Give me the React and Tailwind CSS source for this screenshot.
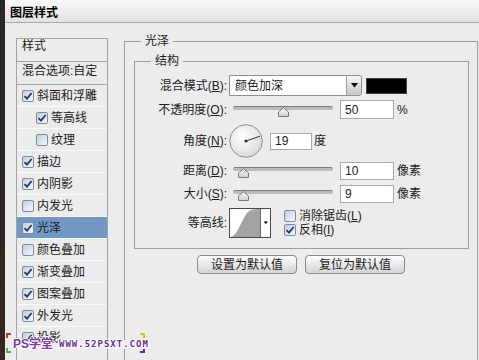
import React from 'react';

const items = [
  { t: '斜面和浮雕', on: true },
  { t: '等高线', on: true, sub: true },
  { t: '纹理', on: false, sub: true },
  { t: '描边', on: true },
  { t: '内阴影', on: true },
  { t: '内发光', on: false },
  { t: '光泽', on: true, sel: true },
  { t: '颜色叠加', on: false },
  { t: '渐变叠加', on: true },
  { t: '图案叠加', on: true },
  { t: '外发光', on: true },
  { t: '投影', on: true },
];

function Check({ on }) {
  return (
    <span className="flex h-[12px] w-[12px] shrink-0 items-center justify-center rounded-[2px] border border-[#7c8ba2] bg-linear-to-br from-[#c3cedd] to-[#f8fafc]">
      {on && (
        <svg width="10" height="10" viewBox="0 0 10 10">
          <path d="M1.5 5.2 L4 7.6 L8.6 2" fill="none" stroke="#1d3a6e" strokeWidth="1.8" />
        </svg>
      )}
    </span>
  );
}

function Label({ children }) {
  return <span className="w-[92px] shrink-0 text-right leading-[14px]">{children}</span>;
}

function Slider({ value }) {
  // thumb position across a 100px track
  const left = 4.5 + (value / 100) * 80;
  return (
    <div className="relative ml-[6px] h-[18px] w-[100px] shrink-0">
      <div className="absolute left-0 right-0 top-[5px] h-[4px] rounded-full border-t border-[#7c7c7c] bg-[#bcbcbc]" />
      <svg className="absolute top-[6px]" style={{ left }} width="11" height="10" viewBox="0 0 11 10">
        <defs>
          <linearGradient id="th" x1="0" y1="0" x2="0" y2="1">
            <stop offset="0" stopColor="#fafafa" />
            <stop offset="1" stopColor="#cfcfcf" />
          </linearGradient>
        </defs>
        <path d="M0.5 5 L5.5 0.7 L10.5 5 L10.5 9.5 L0.5 9.5 Z" fill="url(#th)" stroke="#7a7a7a" />
      </svg>
    </div>
  );
}

function Field({ children, w = 'w-[54px]', h = 'h-[18px]', ml = 'ml-[7px]' }) {
  return (
    <div className={`${ml} ${w} ${h} flex shrink-0 items-center border border-[#a9a9a9] bg-white pl-[4px] text-[12px] leading-[12px]`}>
      {children}
    </div>
  );
}

export default function App() {
  return (
    <div className="relative flex h-[360px] w-[479px] overflow-hidden bg-[#ececec] font-['Liberation_Sans','Noto_Sans_CJK_SC',sans-serif] text-[12px] text-[#1b1b1b]">
      <div className="w-[5px] shrink-0 bg-linear-to-b from-[#262626] via-[#2b2523] to-[#3a2420]" />

      <div className="flex flex-1 flex-col">
        {/* title bar */}
        <div className="flex h-[23px] shrink-0 items-start border-b border-[#a9a9a9] bg-linear-to-b from-[#f8f8f8] to-[#e2e2e2] pl-[5px] pt-[6px]">
          <span className="text-[12px] font-bold leading-[14px] text-black">图层样式</span>
        </div>

        <div className="flex flex-1">
          {/* style list */}
          <div className="ml-[11px] mt-[15px] h-[400px] w-[92px] shrink-0 border border-[#a3a3a3]">
            <div className="h-[23px] border-b border-[#a3a3a3] pl-[5px] pt-[1px] leading-[12px]">样式</div>
            <div className="h-[23px] border-b border-[#a3a3a3] pl-[5px] pt-[3px] leading-[12px]">混合选项:自定</div>
            {items.map((it) => (
              <div
                key={it.t}
                className={`flex h-[22px] items-center gap-[3px] border-b border-[#f9f9f9] leading-[12px] ${it.sub ? 'pl-[19px]' : 'pl-[5px]'} ${it.sel ? 'bg-[#7297c5]' : ''}`}
              >
                <Check on={it.on} />
                <span>{it.t}</span>
              </div>
            ))}
          </div>

          {/* 光泽 group */}
          <fieldset className="ml-[16px] mt-[10px] h-[400px] w-[354px] shrink-0 border border-[#9d9d9d]">
            <legend className="ml-[16px] px-[4px] leading-[16px]">光泽</legend>

            <fieldset className="ml-[9px] mt-[4px] w-[335px] border border-[#9d9d9d] pb-[10px]">
              <legend className="ml-[16px] px-[4px] leading-[16px]">结构</legend>

              <div className="mt-[6px] flex h-[21px] items-center">
                <Label>混合模式(<u>B</u>):</Label>
                <div className="ml-[2px] flex h-[21px] w-[133px] shrink-0 items-center rounded-r-[3px] border border-[#8e8e8e] bg-white">
                  <span className="flex-1 pl-[5px] leading-[14px]">颜色加深</span>
                  <span className="flex h-full w-[15px] items-center justify-center rounded-r-[2px] border-l border-[#a0a0a0] bg-linear-to-b from-[#f7f7f7] to-[#c6c6c6]">
                    <svg width="7" height="5" viewBox="0 0 7 5">
                      <path d="M0 0 H7 L3.5 4.5 Z" fill="#000" />
                    </svg>
                  </span>
                </div>
                <div className="ml-[4px] h-[16px] w-[41px] shrink-0 border border-[#444] bg-black" />
              </div>

              <div className="mt-[4px] flex h-[19px] items-center">
                <Label>不透明度(<u>O</u>):</Label>
                <Slider value={50} />
                <Field h="h-[19px]">50</Field>
                <span className="ml-[3px]">%</span>
              </div>

              <div className="mt-[5px] flex h-[34px] items-center">
                <Label>角度(<u>N</u>):</Label>
                <svg className="ml-[2px] shrink-0" width="34" height="34" viewBox="0 0 34 34">
                  <defs>
                    <radialGradient id="dial" cx="0.4" cy="0.35" r="0.7">
                      <stop offset="0" stopColor="#ffffff" />
                      <stop offset="1" stopColor="#d9d9d9" />
                    </radialGradient>
                  </defs>
                  <circle cx="17" cy="17" r="16.3" fill="url(#dial)" stroke="#8d8d8d" />
                  <line x1="17" y1="17" x2="31" y2="12.2" stroke="#333" strokeWidth="1" />
                  <circle cx="17" cy="17" r="1.6" fill="#333" />
                </svg>
                <Field w="w-[42px]" h="h-[17px]" ml="ml-[7px]">19</Field>
                <span className="ml-[2px]">度</span>
              </div>

              <div className="mt-[4px] flex h-[18px] items-center">
                <Label>距离(<u>D</u>):</Label>
                <Slider value={0} />
                <Field>10</Field>
                <span className="ml-[3px]">像素</span>
              </div>

              <div className="mt-[5px] flex h-[18px] items-center">
                <Label>大小(<u>S</u>):</Label>
                <Slider value={0} />
                <Field>9</Field>
                <span className="ml-[3px]">像素</span>
              </div>

              <div className="mt-[5px] flex h-[30px] items-center">
                <Label>等高线:</Label>
                <svg className="ml-[2px] shrink-0" width="42" height="30" viewBox="0 0 42 30">
                  <rect x="0.5" y="0.5" width="41" height="29" fill="#fff" stroke="#4a4a4a" />
                  <path d="M2 29 C9 27 12 12 19 4 C22 1 26 1 31 1 L31 29 Z" fill="#a3a3a3" />
                  <line x1="31.5" y1="1" x2="31.5" y2="29" stroke="#6a6a6a" />
                  <path d="M34.5 13.5 H39 L36.75 16 Z" fill="#000" />
                </svg>
                <div className="ml-[13px] flex flex-col gap-[2px]">
                  <div className="flex items-center gap-[3px] leading-[12px]">
                    <Check on={false} />
                    <span>消除锯齿(<u>L</u>)</span>
                  </div>
                  <div className="flex items-center gap-[3px] leading-[12px]">
                    <Check on={true} />
                    <span>反相(<u>I</u>)</span>
                  </div>
                </div>
              </div>
            </fieldset>

            <div className="mt-[6px] flex justify-center gap-[8px]">
              <button className="h-[19px] w-[100px] rounded-[4px] border border-[#8a8a8a] bg-linear-to-b from-[#fefefe] to-[#d4d4d4] leading-[14px]">
                设置为默认值
              </button>
              <button className="h-[19px] w-[100px] rounded-[4px] border border-[#8a8a8a] bg-linear-to-b from-[#fefefe] to-[#d4d4d4] leading-[14px]">
                复位为默认值
              </button>
            </div>
          </fieldset>
        </div>
      </div>

      {/* watermark overlay */}
      <div className="absolute left-[6px] top-[333px] h-[20px] w-[139px]">
        <span className="absolute left-0 top-0 h-[5px] w-[5px] border-l-2 border-t-2 border-[#c0392b]" />
        <span className="absolute bottom-0 left-0 h-[5px] w-[5px] border-b-2 border-l-2 border-[#4caf50]" />
        <span className="absolute right-0 top-0 h-[5px] w-[5px] border-r-2 border-t-2 border-[#e0c020]" />
        <span className="absolute bottom-0 right-0 h-[5px] w-[5px] border-b-2 border-r-2 border-[#4a3a8a]" />
        <span className="absolute left-[7px] top-[4px] text-[12px] font-bold leading-[14px] text-[#7a3aa0] [text-shadow:1px_0_#fff,-1px_0_#fff,0_1px_#fff,0_-1px_#fff]">
          PS学堂
        </span>
        <span className="absolute left-[52px] top-[7px] bg-[#f3eef7] px-[1px] font-['DejaVu_Sans_Mono',monospace] text-[9px] font-bold leading-[9px] tracking-[1px] text-[#6a2f90] [text-shadow:1px_0_#fff,-1px_0_#fff,0_1px_#fff,0_-1px_#fff]">
          WWW.52PSXT.COM
        </span>
      </div>
    </div>
  );
}
